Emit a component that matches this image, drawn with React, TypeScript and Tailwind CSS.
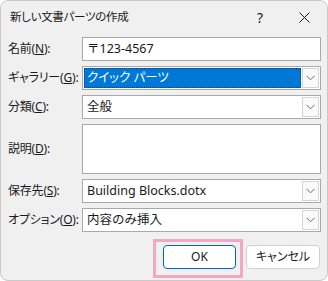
import React from "react";

const font = { fontFamily: '"Noto Sans", "Noto Sans CJK JP", sans-serif' };

function Label({ pre, key1, post = "):" }: { pre: string; key1: string; post?: string }) {
  return (
    <div className="w-[74px] shrink-0 text-[12px] text-[#1a1a1a] whitespace-nowrap [font-feature-settings:'palt'] tracking-[-0.2px]">
      {pre}(<span className="underline">{key1}</span>{post}
    </div>
  );
}

function Chevron() {
  return (
    <svg width="9" height="6" viewBox="0 0 9 6">
      <path d="M0.5 0.8 L4.5 4.8 L8.5 0.8" fill="none" stroke="#6b6b6b" strokeWidth="1" />
    </svg>
  );
}

function Combo({ children, selected = false }: { children?: React.ReactNode; selected?: boolean }) {
  return (
    <div className="flex-1 h-[24px] border border-[#a9a9a9] bg-white flex items-stretch p-[1px]">
      <div className="flex-1 flex items-center min-w-0">
        {selected ? (
          <div className="h-full w-full bg-[#0078d7] border border-dotted border-[#1c3c6c] text-white text-[12.5px] flex items-center pl-[2px] [font-feature-settings:'palt']">
            {children}
          </div>
        ) : (
          <div className="text-[12.5px] text-[#1a1a1a] pl-[3px]">{children}</div>
        )}
      </div>
      <div className="w-[17px] ml-[1px] border border-[#d4d4d4] bg-[#fafafa] flex items-center justify-center">
        <Chevron />
      </div>
    </div>
  );
}

export default function App() {
  return (
    <div className="w-[328px] h-[281px] bg-white" style={font}>
      <div className="relative w-[328px] h-[281px] bg-[#f0f0f0] border border-[#c9c9c9] rounded-[8px] overflow-hidden flex flex-col">
        <div className="h-[32px] flex items-center pl-[9px] shrink-0">
          <div className="text-[11.5px] text-[#1a1a1a] [font-feature-settings:'palt'] tracking-[-0.3px]">新しい文書パーツの作成</div>
          <div className="ml-auto w-[30px] flex justify-center text-[14px] text-[#1a1a1a] mr-[14px]">?</div>
          <div className="w-[30px] flex justify-center mr-[8px]">
            <svg width="11" height="11" viewBox="0 0 11 11">
              <path d="M0.5 0.5 L10.5 10.5 M10.5 0.5 L0.5 10.5" stroke="#1a1a1a" strokeWidth="1" />
            </svg>
          </div>
        </div>
        <div className="flex flex-col gap-[5px] pl-[7px] pr-[6px] pt-[4px]">
          <div className="flex items-center">
            <Label pre="名前" key1="N" />
            <div className="flex-1 h-[24px] border border-[#a9a9a9] bg-white flex items-center pl-[4px] text-[12.5px] text-[#1a1a1a]">
              〒123-4567
            </div>
          </div>
          <div className="flex items-center">
            <Label pre="ギャラリー" key1="G" />
            <Combo selected>クイック パーツ</Combo>
          </div>
          <div className="flex items-center">
            <Label pre="分類" key1="C" />
            <Combo>全般</Combo>
          </div>
          <div className="flex items-center">
            <Label pre="説明" key1="D" />
            <div className="flex-1 h-[50px] border border-[#a9a9a9] bg-white" />
          </div>
          <div className="flex items-center">
            <Label pre="保存先" key1="S" />
            <Combo>Building Blocks.dotx</Combo>
          </div>
          <div className="flex items-center">
            <Label pre="オプション" key1="O" />
            <Combo>内容のみ挿入</Combo>
          </div>
        </div>
        <div className="flex justify-end gap-[10px] pr-[7px] mt-[13px]">
          <div className="w-[73px] h-[24px] rounded-[4px] border border-[#0067c0] bg-white flex items-center justify-center text-[12px] text-[#1a1a1a]">
            OK
          </div>
          <div className="w-[74px] h-[24px] rounded-[4px] border border-[#d0d0d0] bg-white flex items-center justify-center text-[12px] text-[#1a1a1a] [font-feature-settings:'palt']">
            キャンセル
          </div>
        </div>
        <div className="absolute left-[152px] top-[238px] w-[90px] h-[39px] border-[3px] border-[#f2a7c3]" />
      </div>
    </div>
  );
}
